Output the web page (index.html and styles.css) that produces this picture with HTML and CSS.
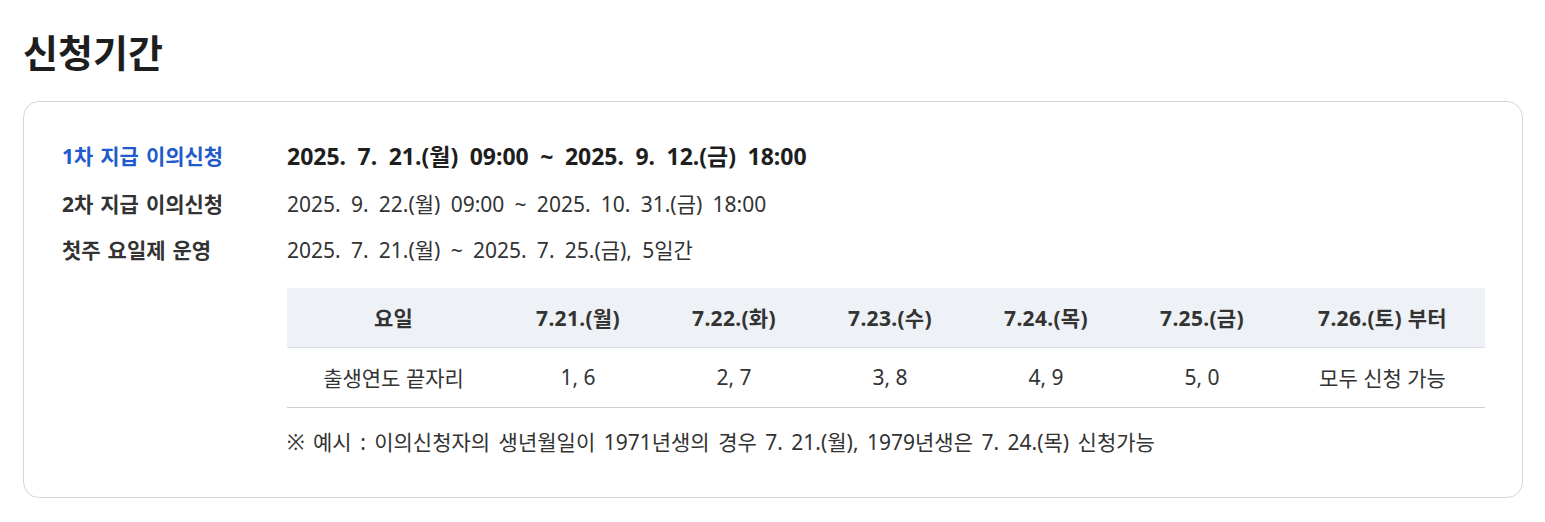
FILE: index.html
```html
<!DOCTYPE html>
<html lang="ko">
<head>
<meta charset="utf-8">
<link rel="stylesheet" href="styles.css">
</head>
<body>
<section class="period">
  <h2 class="title">신청기간</h2>
  <div class="card">
    <dl class="rows">
      <div class="row row-first">
        <dt class="label label-blue">1차 지급 이의신청</dt>
        <dd class="value value-strong">2025. 7. 21.(월) 09:00 ~ 2025. 9. 12.(금) 18:00</dd>
      </div>
      <div class="row">
        <dt class="label">2차 지급 이의신청</dt>
        <dd class="value">2025. 9. 22.(월) 09:00 ~ 2025. 10. 31.(금) 18:00</dd>
      </div>
      <div class="row">
        <dt class="label">첫주 요일제 운영</dt>
        <dd class="value">2025. 7. 21.(월) ~ 2025. 7. 25.(금), 5일간</dd>
      </div>
    </dl>
    <div class="table-wrap">
      <table class="schedule">
        <colgroup>
          <col class="c-first"><col class="c-mid"><col class="c-mid"><col class="c-mid"><col class="c-mid"><col class="c-mid"><col class="c-last">
        </colgroup>
        <thead>
          <tr>
            <th>요일</th><th>7.21.(월)</th><th>7.22.(화)</th><th>7.23.(수)</th><th>7.24.(목)</th><th>7.25.(금)</th><th>7.26.(토) 부터</th>
          </tr>
        </thead>
        <tbody>
          <tr>
            <td>출생연도 끝자리</td><td>1, 6</td><td>2, 7</td><td>3, 8</td><td>4, 9</td><td>5, 0</td><td>모두 신청 가능</td>
          </tr>
        </tbody>
      </table>
      <p class="note">※ 예시 : 이의신청자의 생년월일이 1971년생의 경우 7. 21.(월), 1979년생은 7. 24.(목) 신청가능</p>
    </div>
  </div>
</section>
</body>
</html>
```
FILE: styles.css
```css
* { box-sizing: border-box; }
html, body { margin: 0; padding: 0; background: #fff; }
body {
  font-family: "Noto Sans", "Noto Sans CJK KR", sans-serif;
  color: #222;
}
.period { padding: 26px 22px 0 23px; }
.title {
  margin: 0 0 23px 0;
  font-size: 38px;
  line-height: 52px;
  font-weight: 700;
  color: #1e1e1e;
}
.card {
  width: 1500px;
  border: 1px solid #d6d6d6;
  border-radius: 16px;
  padding: 32px 36px 0 38px;
  height: 397px;
}
.rows { margin: 0; }
.row {
  display: flex;
  align-items: center;
  height: 46px;
}
.row-first { height: 42px; margin-bottom: 4px; }
.label {
  width: 225px;
  flex: none;
  font-size: 21px;
  font-weight: 700;
  color: #333;
  margin: 0;
  word-spacing: 1.5px;
}
.label-blue { color: #1f5bcc; }
.value {
  margin: 0;
  font-size: 21px;
  color: #333;
  word-spacing: 4.8px;
}
.value-strong {
  font-size: 23px;
  font-weight: 700;
  color: #1e1e1e;
  word-spacing: 5.5px;
}
.table-wrap {
  margin-left: 225px;
  margin-top: 16px;
}
.schedule {
  width: 1198px;
  border-collapse: collapse;
  table-layout: fixed;
}
.c-first { width: 213px; }
.c-mid { width: 156px; }
.c-last { width: 205px; }
.schedule th {
  height: 59px;
  background: #eef1f6;
  border-bottom: 1px solid #d9dde4;
  font-size: 21px;
  font-weight: 700;
  color: #333;
  padding: 0;
  letter-spacing: 0.3px;
}
.schedule td {
  height: 60px;
  border-bottom: 1px solid #cfcfcf;
  text-align: center;
  font-size: 21px;
  color: #333;
  padding: 0;
}
.note {
  margin: 20px 0 0 0;
  font-size: 21px;
  line-height: 28px;
  color: #333;
  word-spacing: 3px;
}
```
